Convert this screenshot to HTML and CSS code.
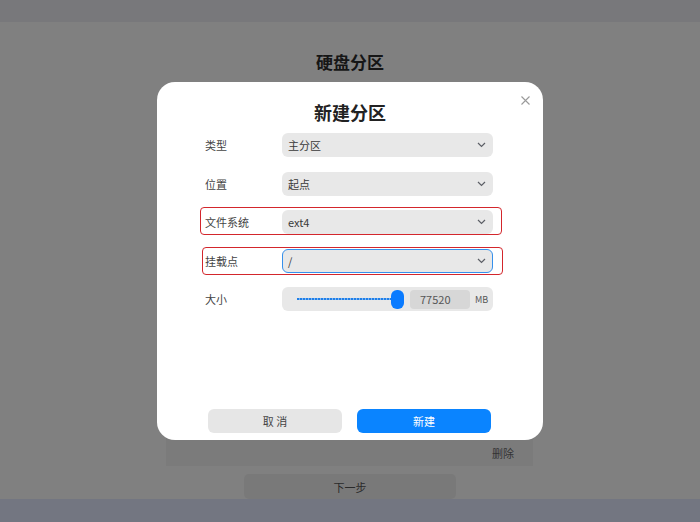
FILE: index.html
```html
<!DOCTYPE html>
<html lang="zh">
<head>
<meta charset="utf-8">
<title>新建分区</title>
<link rel="stylesheet" href="styles.css">
</head>
<body>
<div class="topbar"></div>
<main class="page">
  <h1 class="page-title">硬盘分区</h1>
  <div class="card">
    <div class="card-row"><span class="del">删除</span></div>
  </div>
  <div class="next-wrap"><button class="next">下一步</button></div>

  <div class="dialog">
    <span class="close">
      <svg width="9" height="9" viewBox="0 0 9 9"><path d="M0.5 0.5 L8.5 8.5 M8.5 0.5 L0.5 8.5" stroke="#9a9a9a" stroke-width="1.1" fill="none"/></svg>
    </span>
    <h2 class="dlg-title">新建分区</h2>
    <div class="form">
      <div class="row">
        <span class="label">类型</span>
        <div class="select"><span>主分区</span><svg class="chev" width="9" height="6" viewBox="0 0 9 6"><polyline points="1,1 4.5,4.5 8,1" fill="none" stroke="#5c5f66" stroke-width="1.2"/></svg></div>
      </div>
      <div class="row">
        <span class="label">位置</span>
        <div class="select"><span>起点</span><svg class="chev" width="9" height="6" viewBox="0 0 9 6"><polyline points="1,1 4.5,4.5 8,1" fill="none" stroke="#5c5f66" stroke-width="1.2"/></svg></div>
      </div>
      <div class="row">
        <span class="mark mark-a"></span>
        <span class="label">文件系统</span>
        <div class="select"><span>ext4</span><svg class="chev" width="9" height="6" viewBox="0 0 9 6"><polyline points="1,1 4.5,4.5 8,1" fill="none" stroke="#5c5f66" stroke-width="1.2"/></svg></div>
      </div>
      <div class="row">
        <span class="mark mark-b"></span>
        <span class="label">挂载点</span>
        <div class="select focus"><span>/</span><svg class="chev" width="9" height="6" viewBox="0 0 9 6"><polyline points="1,1 4.5,4.5 8,1" fill="none" stroke="#5c5f66" stroke-width="1.2"/></svg></div>
      </div>
      <div class="row">
        <span class="label">大小</span>
        <div class="slider-box">
          <div class="track"></div>
          <div class="thumb"></div>
          <div class="num">77520</div>
          <span class="unit">MB</span>
        </div>
      </div>
    </div>
    <div class="actions">
      <button class="btn cancel">取 消</button>
      <button class="btn create">新建</button>
    </div>
  </div>
</main>
<div class="bottombar"></div>
</body>
</html>
```
FILE: styles.css
```css
* { box-sizing: border-box; }
html, body { margin: 0; padding: 0; }
body {
  width: 700px;
  height: 522px;
  overflow: hidden;
  background: #737681;
  font-family: "Noto Sans CJK SC", "Noto Sans", sans-serif;
  position: relative;
}
.topbar { height: 22px; background: #78787b; }
.page {
  height: 477px;
  background: #808080;
  display: flex;
  flex-direction: column;
  align-items: center;
}
.page-title {
  margin: 28px 0 0 0;
  font-size: 17px;
  line-height: 24px;
  font-weight: 700;
  color: #161616;
}
.card {
  width: 367px;
  height: 380px;
  margin-top: 14px;
  margin-left: -1px;
  background: #7b7b7b;
  display: flex;
  flex-direction: column;
  justify-content: flex-end;
}
.card-row {
  height: 26px;
  display: flex;
  align-items: center;
  justify-content: flex-end;
  padding-right: 19px;
}
.del { font-size: 11px; color: #333; }
.next-wrap { margin-top: 7px; }
.next {
  width: 212px;
  height: 25px;
  border: none;
  border-radius: 5px;
  background: #797979;
  color: #2a2a2a;
  font-family: inherit;
  font-size: 11px;
  padding: 0;
}
.bottombar { height: 23px; background: #737681; }

.dialog {
  position: absolute;
  left: 157px;
  top: 82px;
  width: 386px;
  height: 358px;
  background: #ffffff;
  border-radius: 18px;
  padding: 18px 50px 7px 48px;
  display: flex;
  flex-direction: column;
}
.close {
  position: absolute;
  right: 13px;
  top: 14px;
  width: 9px;
  height: 9px;
  display: block;
}
.close svg { display: block; }
.dlg-title {
  margin: 0;
  text-align: center;
  font-size: 18px;
  line-height: 24px;
  font-weight: 700;
  color: #222;
  padding-left: 2px;
}
.form {
  margin-top: 9px;
  display: flex;
  flex-direction: column;
  gap: 14.5px;
}
.row {
  position: relative;
  height: 24px;
  display: flex;
  align-items: center;
}
.label {
  width: 77px;
  font-size: 11px;
  color: #444;
}
.select {
  width: 211px;
  height: 24px;
  border-radius: 6px;
  background: #e8e8e8;
  display: flex;
  align-items: center;
  justify-content: space-between;
  padding: 0 7px 0 6px;
  font-size: 11px;
  color: #3a3a3a;
}
.select.focus {
  border: 1.5px solid #3590ec;
  padding-left: 5px;
  padding-right: 6px;
}
.chev { display: block; }
.mark {
  position: absolute;
  border: 1.8px solid #d3262c;
  border-radius: 4px;
  pointer-events: none;
}
.mark-a { left: -5px; right: -9px; top: -3px; bottom: -1px; }
.mark-b { left: -3px; right: -10px; top: -2px; bottom: -2px; }

.slider-box {
  width: 211px;
  height: 24px;
  border-radius: 6px;
  background: #e8e8e8;
  display: flex;
  align-items: center;
  padding-left: 15px;
}
.track {
  width: 96px;
  height: 2px;
  background: repeating-linear-gradient(90deg, #1f7fe8 0 2px, #7fb6f2 2px 3px);
}
.thumb {
  width: 13px;
  height: 19px;
  border-radius: 6px;
  background: #0a7bff;
  margin-left: -2px;
}
.num {
  width: 60px;
  height: 19px;
  margin-left: 6px;
  border-radius: 4px;
  background: #d7d7d7;
  font-size: 11px;
  line-height: 19px;
  color: #555;
  padding-left: 10px;
}
.unit {
  margin-left: 5px;
  font-size: 9px;
  color: #555;
}
.actions {
  margin-top: auto;
  display: flex;
  justify-content: center;
  gap: 15px;
  padding-left: 1px;
}
.btn {
  width: 134px;
  height: 24px;
  border: none;
  border-radius: 6px;
  font-family: inherit;
  font-size: 11px;
  padding: 0;
}
.cancel { background: #e6e6e6; color: #444; }
.create { background: #0a84ff; color: #ffffff; }
```
